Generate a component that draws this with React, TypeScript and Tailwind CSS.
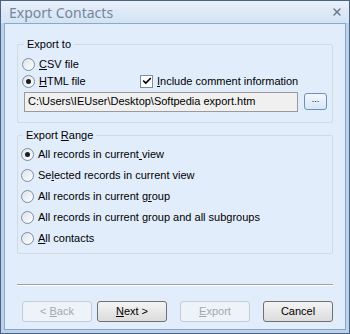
import { Check, X } from "lucide-react";

const font = { fontFamily: "'Liberation Sans', Arial, sans-serif" };

const Mn = ({ label, ul }: { label: string; ul: number }) =>
  ul < 0 ? (
    <>{label}</>
  ) : (
    <>
      {label.slice(0, ul)}
      <span className="underline">{label[ul]}</span>
      {label.slice(ul + 1)}
    </>
  );

const Radio = ({ checked, label, ul }: { checked?: boolean; label: string; ul: number }) => (
  <div className="flex items-center h-[13px] gap-[4px]">
    <span className="w-[13px] h-[13px] rounded-full border border-[#7b8ea3] bg-gradient-to-br from-[#dce3ea] to-white flex items-center justify-center shrink-0">
      {checked && <span className="w-[5px] h-[5px] rounded-full bg-[#1d1d1d]" />}
    </span>
    <span className="text-[11px] text-black leading-none">
      <Mn label={label} ul={ul} />
    </span>
  </div>
);

const Btn = ({ label, ul, disabled }: { label: string; ul: number; disabled?: boolean }) => (
  <button
    className={
      "w-[70px] h-[21px] rounded-[3px] border text-[11px] " +
      (disabled
        ? "border-[#c3ccd7] bg-[#eef3f9] text-[#a0a8b2]"
        : "border-[#707070] bg-gradient-to-b from-[#f4f4f4] to-[#dcdcdc] text-black")
    }
  >
    <Mn label={label} ul={ul} />
  </button>
);

export default function App() {
  return (
    <div className="w-[350px] h-[334px] border border-[#4b6283] bg-[#bcd1ec] flex flex-col" style={font}>
      {/* title bar */}
      <div className="h-[22px] bg-gradient-to-b from-[#e8f0fa] to-[#d3e2f4] flex items-center justify-between pl-[8px] pr-[6px]">
        <span className="text-[14px] text-[#74869c]" style={{ fontFamily: "'Noto Sans', 'Open Sans', sans-serif" }}>
          Export Contacts
        </span>
        <X className="w-[12px] h-[12px] text-[#6b7a8d]" strokeWidth={3} />
      </div>

      {/* client area */}
      <div className="relative flex-1 mx-[3px] mb-[3px] border border-[#8aa7cc] bg-[#e2edfc] px-[12px] pt-[12px] flex flex-col">
        <fieldset className="border border-[#d2dae2] rounded-[2px] px-[4px] pb-[10px] h-[87px]">
          <legend className="ml-[2px] px-[3px] text-[11px] text-black">Export to</legend>
          <div className="flex flex-col gap-[4px] mt-[5px]">
            <Radio label="CSV file" ul={0} />
            <div className="flex items-center">
              <div className="w-[118px]">
                <Radio checked label="HTML file" ul={0} />
              </div>
              <div className="flex items-center gap-[4px]">
                <span className="w-[13px] h-[13px] border border-[#7b8ea3] bg-white flex items-center justify-center">
                  <Check className="w-[10px] h-[10px] text-black" strokeWidth={4} />
                </span>
                <span className="text-[11px] leading-none">
                  <span className="underline">I</span>nclude comment information
                </span>
              </div>
            </div>
            <div className="flex items-center gap-[6px] ml-[2px]">
              <div className="w-[274px] h-[20px] border border-[#9a9a9a] bg-[#f0f0f0] text-[11px] flex items-center px-[3px]">
                C:\Users\IEUser\Desktop\Softpedia export.htm
              </div>
              <button className="w-[23px] h-[17px] rounded-[3px] border border-[#6d8fb8] bg-gradient-to-b from-[#f2f7fd] to-[#d8e6f6] text-[9px] leading-none pb-[4px]">
                ...
              </button>
            </div>
          </div>
        </fieldset>

        <fieldset className="mt-[4px] border border-[#d2dae2] rounded-[2px] px-[3px] h-[127px]">
          <legend className="ml-[2px] px-[3px] text-[11px] text-black">
            Export <span className="underline">R</span>ange
          </legend>
          <div className="flex flex-col gap-[8px] mt-[4px]">
            <Radio checked label="All records in current view" ul={22} />
            <Radio label="Selected records in current view" ul={2} />
            <Radio label="All records in current group" ul={24} />
            <Radio label="All records in current group and all subgroups" ul={-1} />
            <Radio label="All contacts" ul={0} />
          </div>
        </fieldset>

        <div className="mt-[30px] border-t border-[#a0a0a0] border-b border-b-white" />

        <div className="flex justify-end gap-[5px] mt-[15px]">
          <Btn label="< Back" ul={2} disabled />
          <Btn label="Next >" ul={0} />
          <div className="w-[3px]" />
          <Btn label="Export" ul={0} disabled />
          <div className="w-[3px]" />
          <Btn label="Cancel" ul={-1} />
        </div>
      </div>
    </div>
  );
}
